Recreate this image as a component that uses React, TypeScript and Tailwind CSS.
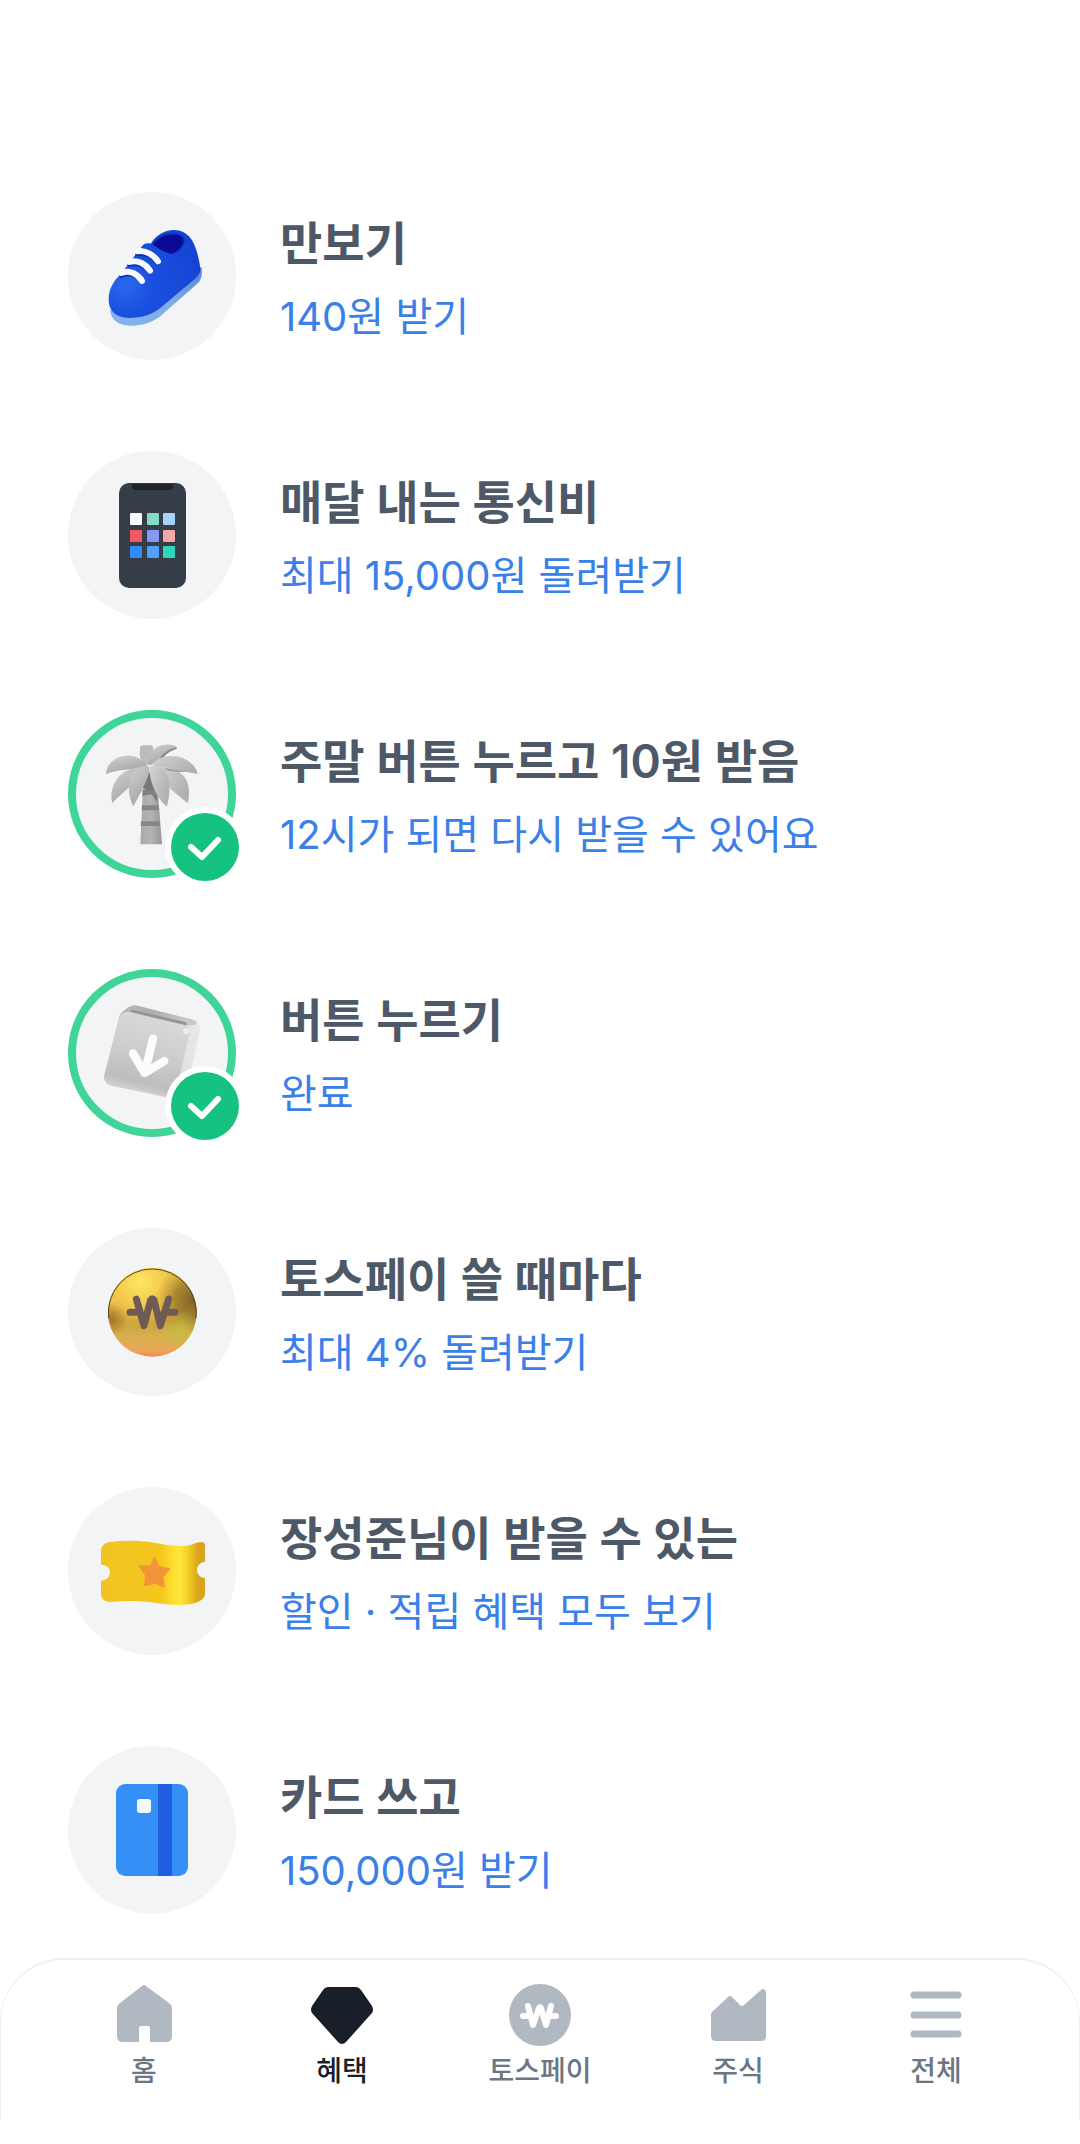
import type { ReactNode } from 'react'
import clsx from 'clsx'

interface Benefit {
  id: string
  title: string
  description: string
  icon: ReactNode
  done?: boolean
}

interface Tab {
  id: string
  label: string
  icon: ReactNode
}

function ShoeIcon() {
  return (
    <svg viewBox="54 39 504 504" className="size-full" aria-hidden="true">
      <defs>
        <radialGradient id="shoe-body" gradientUnits="userSpaceOnUse" cx="225" cy="320" r="230">
          <stop offset="0" stopColor="#2c68ee" />
          <stop offset="0.35" stopColor="#1a50df" />
          <stop offset="1" stopColor="#1544d4" />
        </radialGradient>
        <linearGradient id="shoe-sole" gradientUnits="userSpaceOnUse" x1="180" y1="430" x2="455" y2="280">
          <stop offset="0" stopColor="#86b4ee" />
          <stop offset="0.6" stopColor="#7fabe6" />
          <stop offset="1" stopColor="#5b8bd8" />
        </linearGradient>
      </defs>
      <path
        d="M180 392 C182 424 208 440 245 440 C276 440 302 432 327 415 L440 316 C454 304 457 290 455 264 L400 300 L250 400 Z"
        fill="url(#shoe-sole)"
      />
      <path
        d="M302 194 C318 169 342 153 372 153 C397 153 416 166 428 187 C441 212 447 241 451 266 C453 282 444 292 431 303 L326 391 C302 408 274 417 236 417 C198 415 176 396 176 362 C176 330 190 306 211 287 L277 200 C283 193 293 191 302 194 Z"
        fill="url(#shoe-body)"
      />
      <path
        d="M306 195 C325 172 351 162 380 165 C398 168 405 180 402 192 C397 208 383 220 369 224 C348 224 331 212 306 195 Z"
        fill="#0a0a94"
      />
      <path
        d="M306 195 C325 172 351 160 380 164 C398 168 407 180 402 192 C397 208 383 221 369 224"
        fill="none"
        stroke="#0f38cc"
        strokeWidth="5"
      />
      <g fill="none" strokeLinecap="round">
        <g stroke="#0b2fae" strokeWidth="13">
          <path d="M262 225 C286 222 309 232 323 252" />
          <path d="M238 257 C262 249 285 259 299 280" />
          <path d="M214 290 C238 279 262 288 276 309" />
        </g>
        <g stroke="#f7f8fd" strokeWidth="18">
          <path d="M262 217 C286 213 311 227 324 247" />
          <path d="M238 249 C262 241 287 255 300 275" />
          <path d="M214 282 C238 271 264 285 276 306" />
        </g>
      </g>
    </svg>
  )
}

function PhoneIcon() {
  return (
    <svg viewBox="0 0 168 168" className="size-full" aria-hidden="true">
      <rect x="51" y="32" width="67" height="105" rx="10" fill="#353d48" />
      <path d="M64 33 H105 V36 Q105 39 101 39 H68 Q64 39 64 36 Z" fill="#20242d" />
      <rect x="62" y="62" width="12" height="12" rx="1" fill="#f9fafb" />
      <rect x="79" y="62" width="12" height="12" rx="1" fill="#84dcc6" />
      <rect x="95" y="62" width="12" height="12" rx="1" fill="#a5d2fb" />
      <rect x="62" y="79" width="12" height="12" rx="1" fill="#f15b5f" />
      <rect x="79" y="79" width="12" height="12" rx="1" fill="#8a98f5" />
      <rect x="95" y="79" width="12" height="12" rx="1" fill="#f4a6a8" />
      <rect x="62" y="95" width="12" height="12" rx="1" fill="#3289fb" />
      <rect x="79" y="95" width="12" height="12" rx="1" fill="#4ea2f8" />
      <rect x="95" y="95" width="12" height="12" rx="1" fill="#2dd5bd" />
    </svg>
  )
}

function PalmIcon() {
  return (
    <svg viewBox="54 29 504 504" className="size-full" aria-hidden="true">
      <defs>
        <linearGradient id="palm-leaf" x1="0" y1="0" x2="0.6" y2="1">
          <stop offset="0" stopColor="#d2d2d2" />
          <stop offset="1" stopColor="#a3a3a3" />
        </linearGradient>
        <linearGradient id="palm-front" x1="0" y1="0" x2="1" y2="0.6">
          <stop offset="0" stopColor="#d3d3d3" />
          <stop offset="1" stopColor="#b0b0b0" />
        </linearGradient>
        <linearGradient id="palm-trunk" x1="0" y1="0" x2="1" y2="0">
          <stop offset="0" stopColor="#a9a9a9" />
          <stop offset="0.5" stopColor="#b4b4b4" />
          <stop offset="1" stopColor="#969696" />
        </linearGradient>
      </defs>
      <path d="M281 215 H319 L336 432 H271 Z" fill="url(#palm-trunk)" />
      <path d="M281 215 H319 L322 306 L300 274 L279 262 Z" fill="#777777" />
      <path d="M278 269 H321 L323 290 Q300 276 277 288 Z" fill="#818181" />
      <path d="M276 315 H325 L326 330 H275 Z" fill="#868686" />
      <path d="M273 363 H329 L330 377 H272 Z" fill="#868686" />
      <path d="M270 145 Q270 135 281 135 H302 Q310 136 310 145 L306 194 H277 L269 166 Z" fill="#bbbbbb" />
      <path d="M295 192 C296 158 316 134 345 133 C360 131 371 133 381 140 C360 150 341 162 325 186 Z" fill="url(#palm-leaf)" />
      <path d="M325 186 C330 165 350 148 381 140 L379 146 C356 154 342 166 331 183 Z" fill="#898989" />
      <path d="M292 198 C270 160 214 158 185 184 C175 193 169 205 168 221 C206 206 235 208 268 205 Z" fill="url(#palm-leaf)" />
      <path d="M306 194 C326 162 382 161 410 179 C427 190 440 203 443 221 C412 215 377 211 344 203 Z" fill="url(#palm-front)" />
      <path d="M280 201 C245 198 213 215 197 242 C185 262 181 287 187 309 C206 286 233 270 255 240 Z" fill="url(#palm-leaf)" />
      <path d="M328 199 C367 198 397 215 409 239 C419 260 419 287 413 309 C391 288 365 275 345 246 Z" fill="url(#palm-front)" />
      <path d="M298 199 C271 188 243 211 238 243 C234 272 239 299 250 318 C265 289 285 258 298 215 Z" fill="url(#palm-leaf)" />
      <path d="M299 199 C324 187 350 206 356 235 C361 264 358 294 350 319 C324 298 302 254 299 216 Z" fill="url(#palm-front)" />
      <path d="M345 203 C369 208 388 211 411 214 C386 216 364 213 347 208 Z" fill="#9c9c9c" />
    </svg>
  )
}

function ButtonCubeIcon() {
  return (
    <svg viewBox="54 27 504 504" className="size-full" aria-hidden="true">
      <defs>
        <linearGradient id="cube-front" x1="0.6" y1="0" x2="0.35" y2="1">
          <stop offset="0" stopColor="#dadada" />
          <stop offset="0.45" stopColor="#cecece" />
          <stop offset="0.82" stopColor="#bdbdbd" />
          <stop offset="1" stopColor="#dfdfdf" />
        </linearGradient>
        <linearGradient id="cube-side" x1="0" y1="0" x2="1" y2="0">
          <stop offset="0" stopColor="#c9c9c9" />
          <stop offset="1" stopColor="#e8e8e8" />
        </linearGradient>
        <linearGradient id="cube-top" x1="0" y1="0" x2="1" y2="0.3">
          <stop offset="0" stopColor="#bababa" />
          <stop offset="0.5" stopColor="#aeaeae" />
          <stop offset="1" stopColor="#c8c8c8" />
        </linearGradient>
      </defs>
      <path
        d="M207 172 C212 155 236 138 256 136 L425 178 C443 183 452 195 449 213 L413 380 C406 405 385 420 358 414 L184 377 C168 373 160 361 163 347 Z"
        fill="url(#cube-side)"
      />
      <path d="M207 172 C212 155 236 138 256 136 L425 178 C439 182 444 190 436 194 L406 198 L238 158 Z" fill="url(#cube-top)" />
      <path d="M247 149 L405 186 C411 188 413 193 406 195 L247 157 C241 155 241 149 247 149 Z" fill="#939393" />
      <path
        d="M207 178 C210 161 225 154 241 157 L401 195 C416 199 421 209 418 223 L379 392 C375 407 361 414 345 410 L184 373 C168 369 160 358 163 345 Z"
        fill="url(#cube-front)"
      />
      <circle cx="408" cy="214" r="9" fill="#efefef" />
      <path
        d="M309 236 L284 339 M249 280 L284 339 L343 303"
        fill="none"
        stroke="#fbfcfc"
        strokeWidth="25"
        strokeLinecap="round"
        strokeLinejoin="round"
      />
    </svg>
  )
}

function CoinIcon() {
  return (
    <svg viewBox="54 54 504 504" className="size-full" aria-hidden="true">
      <defs>
        <linearGradient id="coin-base" x1="0" y1="0" x2="0" y2="1">
          <stop offset="0" stopColor="#f0ce48" />
          <stop offset="0.35" stopColor="#e8bf45" />
          <stop offset="0.6" stopColor="#c89d3c" />
          <stop offset="0.75" stopColor="#d6ae4c" />
          <stop offset="0.92" stopColor="#e9a857" />
          <stop offset="1" stopColor="#f48955" />
        </linearGradient>
        <radialGradient id="coin-shine" cx="0.36" cy="0.16" r="0.55">
          <stop offset="0" stopColor="#ffe765" />
          <stop offset="0.5" stopColor="#f5cb50" stopOpacity="0.8" />
          <stop offset="1" stopColor="#e4b93f" stopOpacity="0" />
        </radialGradient>
        <radialGradient id="coin-shade" cx="0.96" cy="0.36" r="0.42">
          <stop offset="0" stopColor="#7d6226" />
          <stop offset="0.5" stopColor="#8f702a" stopOpacity="0.7" />
          <stop offset="1" stopColor="#a8822e" stopOpacity="0" />
        </radialGradient>
        <radialGradient id="coin-glow" cx="0.82" cy="0.72" r="0.24">
          <stop offset="0" stopColor="#c9bb42" />
          <stop offset="1" stopColor="#c9bb42" stopOpacity="0" />
        </radialGradient>
        <radialGradient id="coin-edge" cx="0.04" cy="0.58" r="0.18">
          <stop offset="0" stopColor="#a5772d" />
          <stop offset="1" stopColor="#a5772d" stopOpacity="0" />
        </radialGradient>
      </defs>
      <circle cx="307" cy="307" r="133" fill="url(#coin-base)" />
      <circle cx="307" cy="307" r="133" fill="url(#coin-shine)" />
      <circle cx="307" cy="307" r="133" fill="url(#coin-edge)" />
      <circle cx="307" cy="307" r="133" fill="url(#coin-shade)" />
      <circle cx="307" cy="307" r="133" fill="url(#coin-glow)" />
      <path d="M176 325 A132 132 0 1 1 438 325" fill="none" stroke="#57451c" strokeWidth="3" />
      <path
        d="M259 267 L282 347 L302 270 Q307 263 312 270 L331 347 L356 267 M240 307 H266 M349 307 H375"
        fill="none"
        stroke="#6f5a55"
        strokeWidth="21"
        strokeLinecap="round"
        strokeLinejoin="round"
      />
    </svg>
  )
}

function TicketIcon() {
  return (
    <svg viewBox="54 51 504 504" className="size-full" aria-hidden="true">
      <defs>
        <linearGradient id="ticket" x1="0" y1="0" x2="1" y2="0">
          <stop offset="0" stopColor="#f0c322" />
          <stop offset="0.58" stopColor="#f4c71c" />
          <stop offset="0.68" stopColor="#fddc2c" />
          <stop offset="0.76" stopColor="#ffe83d" />
          <stop offset="0.84" stopColor="#f3cd25" />
          <stop offset="0.93" stopColor="#daa51c" />
          <stop offset="1" stopColor="#d9a41f" />
        </linearGradient>
      </defs>
      <path
        d="M153 240 C155 225 166 217 182 216 C220 211 268 211 305 217 C345 224 395 235 430 222 C444 216 465 212 465 225 V275 C449 277 441 288 441 300 C441 313 450 323 465 324 V373 C463 389 447 396 428 401 C391 408 354 404 318 399 C274 391 221 392 181 396 C165 396 155 387 153 375 V332 C170 331 180 322 180 307 C180 294 171 285 153 284 Z"
        fill="url(#ticket)"
      />
      <path
        d="M314 262 L326 290 L359 296 L338 321 L343 351 L314 339 L284 347 L287 315 L268 288 L301 288 Z"
        fill="#f4943a"
        stroke="#f4943a"
        strokeWidth="4"
        strokeLinejoin="round"
      />
    </svg>
  )
}

function CardIcon() {
  return (
    <svg viewBox="54 45 504 504" className="size-full" aria-hidden="true">
      <rect x="198" y="159" width="216" height="276" rx="28" fill="#348ff7" />
      <rect x="324" y="159" width="42" height="276" fill="#205de0" />
      <rect x="261" y="204" width="42" height="42" rx="8" fill="#f5f7f8" />
    </svg>
  )
}

function DoneBadge() {
  return (
    <span className="absolute -right-[3px] -bottom-[3px] size-17 rounded-full bg-[#15c27f] ring-6 ring-white">
      <svg viewBox="0 0 68 68" className="size-full" aria-hidden="true">
        <path
          d="M20 34 L31 44 L47 27"
          fill="none"
          stroke="#ffffff"
          strokeWidth="6"
          strokeLinecap="round"
          strokeLinejoin="round"
        />
      </svg>
    </span>
  )
}

function HomeIcon() {
  return (
    <svg viewBox="0 0 64 64" className="size-16" fill="currentColor" aria-hidden="true">
      <path d="M30 3 Q32 1 34 3 L57 20 Q60 22 60 26 V53 Q60 59 54 59 H38 V45 Q38 43 36 43 H29 Q27 43 27 45 V59 H11 Q5 59 5 53 V26 Q5 22 8 20 Z" />
    </svg>
  )
}

function DiamondIcon() {
  return (
    <svg viewBox="0 0 64 64" className="size-16" fill="currentColor" aria-hidden="true">
      <path d="M18 4 H46 Q49 4 51 7 L62 23 Q64 27 62 30 L36 59 Q32 63 28 59 L2 30 Q0 27 2 23 L13 7 Q15 4 18 4 Z" />
    </svg>
  )
}

function WonIcon() {
  return (
    <svg viewBox="0 0 64 64" className="size-16" aria-hidden="true">
      <circle cx="32" cy="32" r="31" fill="currentColor" />
      <path
        d="M20 23 L25 42 L31 25 Q32 23 33 25 L38 42 L43 23 M15 33 H22 M41 33 H48"
        fill="none"
        stroke="#ffffff"
        strokeWidth="6"
        strokeLinecap="round"
        strokeLinejoin="round"
      />
    </svg>
  )
}

function StockIcon() {
  return (
    <svg viewBox="0 0 64 64" className="size-16" fill="currentColor" aria-hidden="true">
      <path d="M5 32 Q5 30 6 29 L22 14 Q24 12 26 14 L34 22 Q36 24 38 22 L55 7 Q57 5 59 7 Q60 8 60 10 V53 Q60 58 55 58 H10 Q5 58 5 53 Z" />
    </svg>
  )
}

function MenuIcon() {
  return (
    <svg viewBox="0 0 64 64" className="size-16" aria-hidden="true">
      <path d="M10 12 H54 M10 32 H54 M10 51 H54" stroke="currentColor" strokeWidth="7" strokeLinecap="round" />
    </svg>
  )
}

const BENEFITS: Benefit[] = [
  { id: 'steps', title: '만보기', description: '140원 받기', icon: <ShoeIcon /> },
  { id: 'phone-bill', title: '매달 내는 통신비', description: '최대 15,000원 돌려받기', icon: <PhoneIcon /> },
  {
    id: 'weekend',
    title: '주말 버튼 누르고 10원 받음',
    description: '12시가 되면 다시 받을 수 있어요',
    icon: <PalmIcon />,
    done: true,
  },
  { id: 'button', title: '버튼 누르기', description: '완료', icon: <ButtonCubeIcon />, done: true },
  { id: 'pay', title: '토스페이 쓸 때마다', description: '최대 4% 돌려받기', icon: <CoinIcon /> },
  { id: 'coupons', title: '장성준님이 받을 수 있는', description: '할인 · 적립 혜택 모두 보기', icon: <TicketIcon /> },
  { id: 'card', title: '카드 쓰고', description: '150,000원 받기', icon: <CardIcon /> },
]

const TABS: Tab[] = [
  { id: 'home', label: '홈', icon: <HomeIcon /> },
  { id: 'benefits', label: '혜택', icon: <DiamondIcon /> },
  { id: 'pay', label: '토스페이', icon: <WonIcon /> },
  { id: 'stock', label: '주식', icon: <StockIcon /> },
  { id: 'all', label: '전체', icon: <MenuIcon /> },
]

function BenefitRow({ benefit }: { benefit: Benefit }) {
  return (
    <li>
      <a href={`#${benefit.id}`} className="flex items-center gap-11">
        <span className="relative size-42 shrink-0 rounded-full bg-[#f2f4f6]">
          {benefit.icon}
          {/* Green ring and tick once today's reward is claimed */}
          {benefit.done && (
            <>
              <span className="absolute inset-0 rounded-full border-8 border-[#40d598]" />
              <DoneBadge />
            </>
          )}
        </span>
        <span className="flex min-w-0 flex-col gap-2 pt-1.5">
          <span className="text-[46px] leading-[68px] font-semibold text-[#4e5968]">{benefit.title}</span>
          <span className="text-[40px] leading-[64px] text-[#3a80e8]">{benefit.description}</span>
        </span>
      </a>
    </li>
  )
}

function TabBar({ active }: { active: string }) {
  return (
    <div className="sticky bottom-0 bg-white pb-6">
      <nav
        className="rounded-t-[64px] border-x border-t-2 border-[#eff1f3] px-11 pt-[23px] pb-[33px]"
        aria-label="하단 메뉴"
      >
        <ul className="grid grid-cols-5">
          {TABS.map((tab) => (
            <li key={tab.id}>
              <a
                href={`#${tab.id}`}
                aria-current={tab.id === active ? 'page' : undefined}
                className="flex flex-col items-center gap-2"
              >
                <span className={tab.id === active ? 'text-[#191f28]' : 'text-[#b0b8c1]'}>{tab.icon}</span>
                <span
                  className={clsx(
                    'text-[28px] leading-8 font-medium',
                    tab.id === active ? 'text-[#191f28]' : 'text-[#6b7684]',
                  )}
                >
                  {tab.label}
                </span>
              </a>
            </li>
          ))}
        </ul>
      </nav>
    </div>
  )
}

function App() {
  return (
    <div className="flex min-h-screen flex-col bg-white font-[Inter,'Noto_Sans_CJK_KR',sans-serif]">
      <main className="flex-1 px-17 pt-48 pb-11">
        <ul className="flex flex-col gap-[91px]">
          {BENEFITS.map((benefit) => (
            <BenefitRow key={benefit.id} benefit={benefit} />
          ))}
        </ul>
      </main>
      <TabBar active="benefits" />
    </div>
  )
}

export default App
